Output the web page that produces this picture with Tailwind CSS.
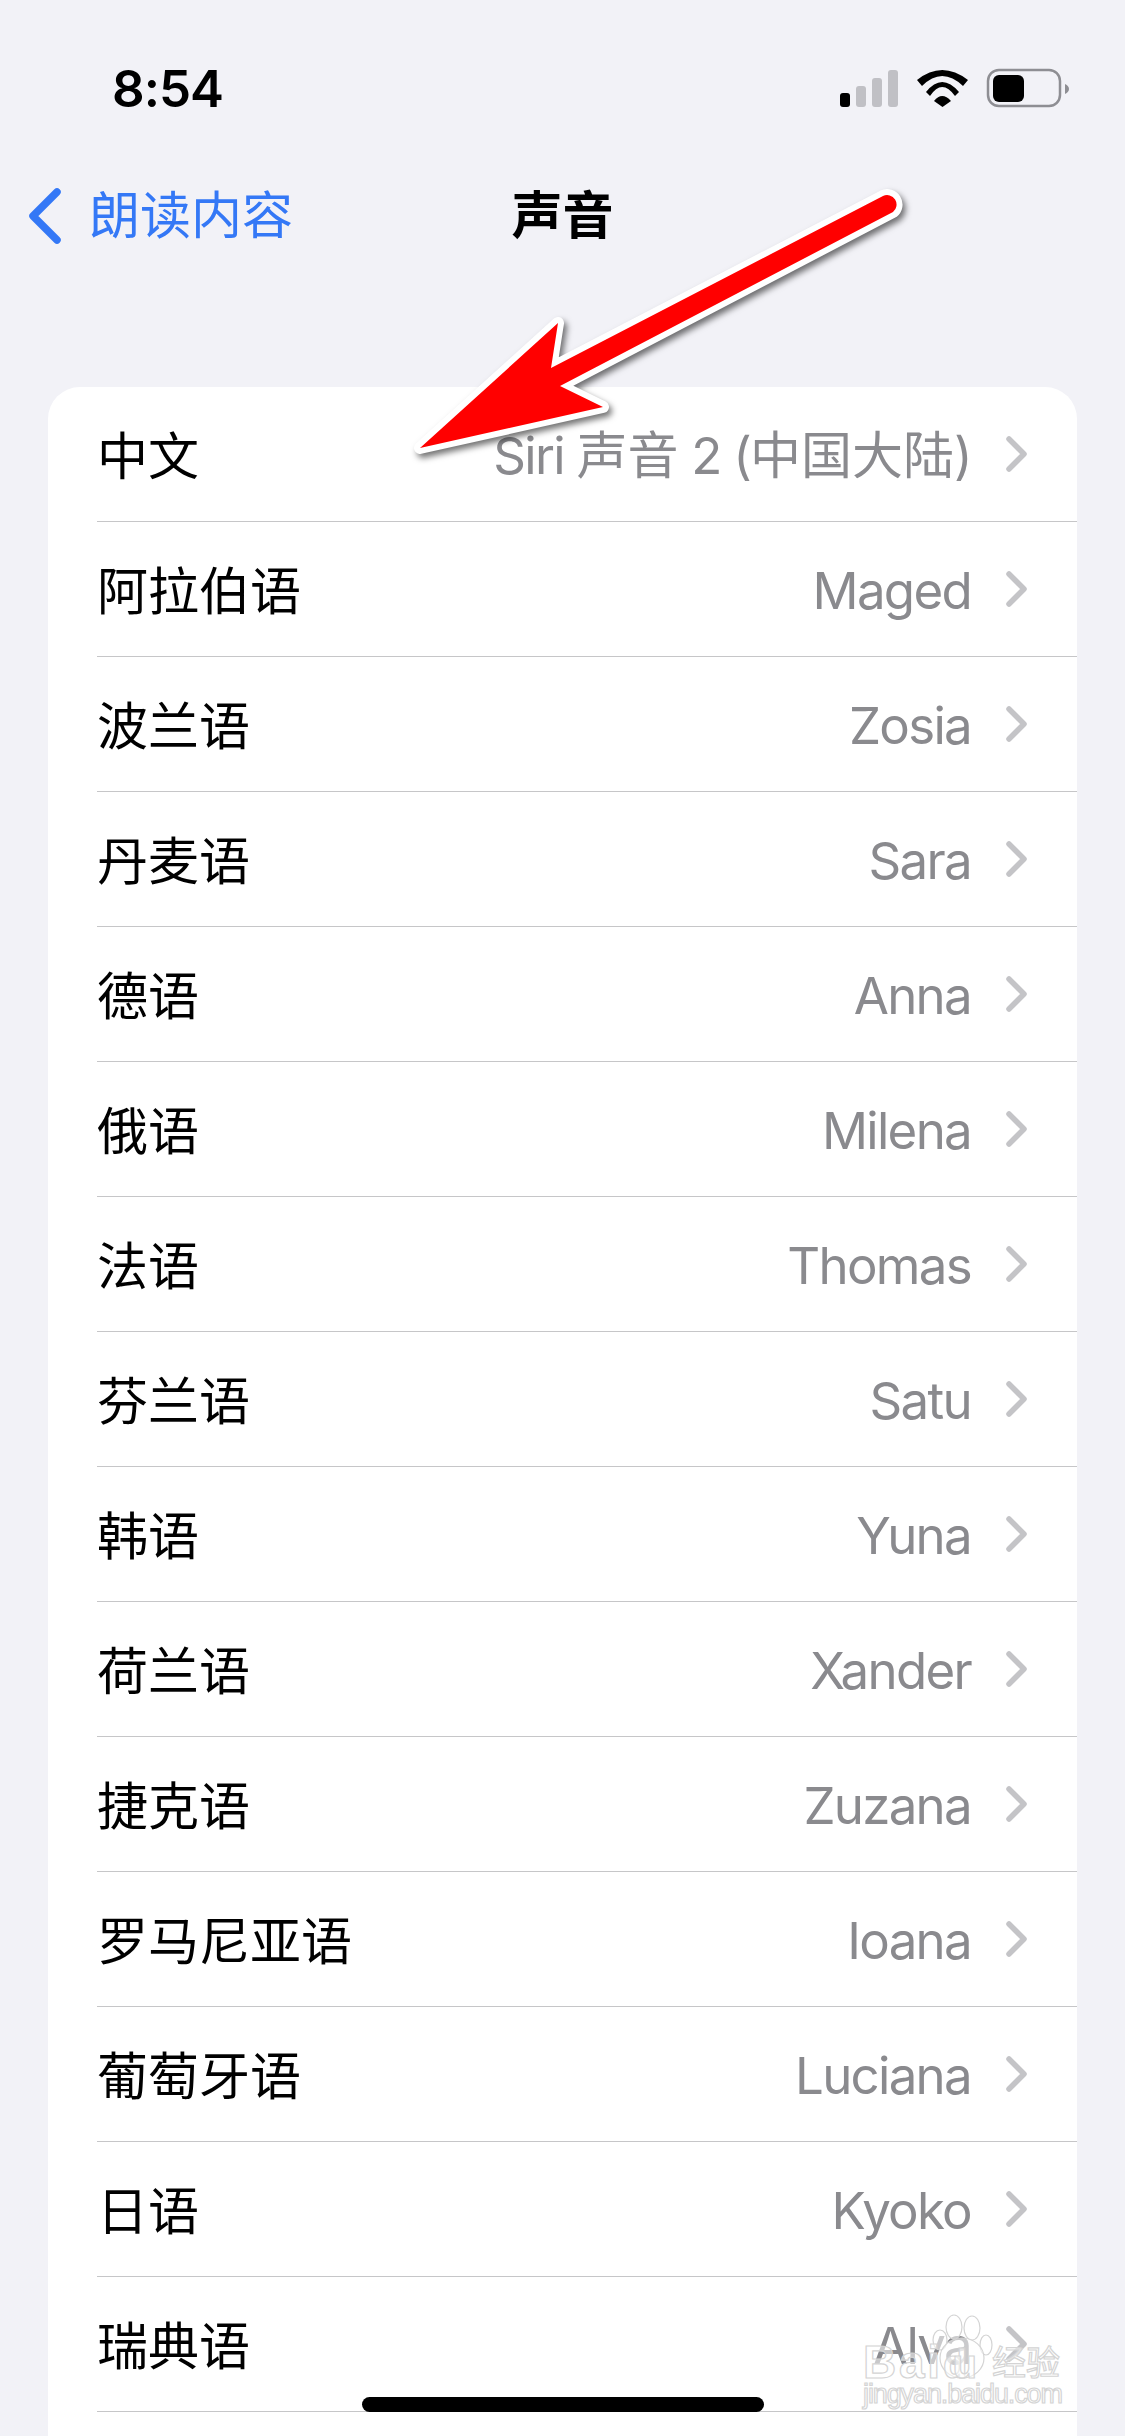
<!DOCTYPE html>
<html lang="zh-CN">
<head>
  <meta charset="UTF-8" />
  <title>声音</title>
  <script src="https://cdn.jsdelivr.net/npm/@tailwindcss/browser@4"></script>
</head>
<body class="bg-[#f2f2f7]">
  <div class="relative w-[1125px] h-[2436px] overflow-hidden bg-[#f2f2f7] font-['Inter','Noto_Sans_CJK_SC',sans-serif] text-[51px] text-black">

    <!-- status bar -->
    <div class="h-[176px] relative">
      <span class="absolute left-[112px] top-[59px] font-semibold leading-[60px] tracking-[-1px]">8:54</span>
      <svg class="absolute left-[836px] top-[64px]" width="240" height="50" viewBox="836 64 240 50">
        <rect x="840" y="93" width="10" height="14" rx="3" fill="#000"/>
        <rect x="856" y="86" width="10" height="21" rx="3" fill="#c0c0c5"/>
        <rect x="872" y="78" width="10" height="29" rx="3" fill="#c0c0c5"/>
        <rect x="888" y="70" width="10" height="37" rx="3" fill="#c0c0c5"/>
        <path d="M917 80 Q942 60 968 80 L963 86 Q942 66 922 86 Z" fill="#000"/>
        <path d="M926 92 Q942 72 959 92 L955 96 Q942 78 930 96 Z" fill="#000"/>
        <path d="M934 101 Q942 91 951 101 L942.5 107 Z" fill="#000"/>
        <rect x="988" y="70" width="72" height="36" rx="11" fill="none" stroke="#8e8e93" stroke-width="2.5"/>
        <rect x="993" y="75" width="31" height="27" rx="6" fill="#000"/>
        <path d="M1065 84 Q1069 86 1069 89 Q1069 92 1065 94 Z" fill="#8e8e93"/>
      </svg>
    </div>

    <!-- nav -->
    <div class="relative h-[80px] flex items-center justify-center font-semibold">
      <div class="absolute left-[28px] top-0 h-full flex items-center gap-[28px] text-[#3478f6] font-normal">
        <svg width="33" height="56" viewBox="0 0 33 56"><path d="M29 4 L5 28 L29 52" fill="none" stroke="#3478f6" stroke-width="7.5" stroke-linecap="round" stroke-linejoin="round"/></svg>
        <span>朗读内容</span>
      </div>
      <span>声音</span>
    </div>

    <!-- list, rows are filled in below -->
    <div id="voices" class="absolute left-[48px] top-[387px] w-[1029px] h-[2049px] bg-white rounded-t-[32px]"></div>

    <template id="row">
      <div class="h-[135px] ml-[49px] pr-[50px] flex items-center justify-between border-b border-[#c6c6c8]">
        <span data-lang class="pt-[7px]"></span>
        <span class="flex items-center gap-[35px] text-[#8a8a8e]">
          <span data-voice class="pt-[5px] tracking-[-1.7px]"></span>
          <svg width="21" height="36" viewBox="0 0 21 36"><path d="M3 3 L18 18 L3 33" fill="none" stroke="#c4c4c7" stroke-width="5.5" stroke-linecap="round" stroke-linejoin="round"/></svg>
        </span>
      </div>
    </template>

    <!-- home indicator -->
    <div class="absolute left-[362px] top-[2397px] w-[402px] h-[15px] rounded-full bg-black"></div>

    <!-- annotation arrow -->
    <svg class="absolute left-0 top-0 drop-shadow-[3px_4px_3px_rgba(0,0,0,0.55)]" width="1125" height="600" viewBox="0 0 1125 600">
      <path d="M551 368 L558 323 L420 448 L603 407 L560 386 L893 212 A9.5 9.5 0 0 0 883 196 Z" fill="#f00" stroke="#fff" stroke-width="12" stroke-linejoin="round" paint-order="stroke"/>
    </svg>

    <!-- watermark -->
    <svg class="absolute left-[840px] top-[2300px]" width="240" height="130" viewBox="840 2300 240 130" fill="#ffffff" fill-opacity="0.55" stroke="#d4d4d4" stroke-width="1.2">
      <ellipse cx="954" cy="2327" rx="8" ry="12"/>
      <ellipse cx="972" cy="2328" rx="8" ry="12"/>
      <ellipse cx="940" cy="2340" rx="7" ry="10"/>
      <ellipse cx="986" cy="2345" rx="6" ry="10"/>
      <ellipse cx="962" cy="2358" rx="22" ry="20"/>
      <text x="863" y="2378" font-family="Liberation Sans" font-weight="700" font-size="46" textLength="77">Bai</text>
      <text x="943" y="2378" font-family="Liberation Sans" font-weight="700" font-size="40" textLength="34">du</text>
      <text x="992" y="2375" font-family="Noto Sans CJK SC" font-size="34" textLength="68">经验</text>
      <text x="863" y="2403" font-family="Liberation Sans" font-size="27" textLength="200">jingyan.baidu.com</text>
    </svg>
  </div>

  <script>
    const voices = [
      ['中文', 'Siri <span class="tracking-normal">声音</span> 2 (<span class="tracking-normal">中国大陆</span>)'],
      ['阿拉伯语', 'Maged'], ['波兰语', 'Zosia'], ['丹麦语', 'Sara'], ['德语', 'Anna'],
      ['俄语', 'Milena'], ['法语', 'Thomas'], ['芬兰语', 'Satu'], ['韩语', 'Yuna'],
      ['荷兰语', 'Xander'], ['捷克语', 'Zuzana'], ['罗马尼亚语', 'Ioana'], ['葡萄牙语', 'Luciana'],
      ['日语', 'Kyoko'], ['瑞典语', 'Alva']
    ];
    const list = document.getElementById('voices');
    const tpl = document.getElementById('row');
    voices.forEach(([lang, voice]) => {
      const row = tpl.content.cloneNode(true);
      row.querySelector('[data-lang]').textContent = lang;
      row.querySelector('[data-voice]').innerHTML = voice;
      list.appendChild(row);
    });
  </script>
</body>
</html>
